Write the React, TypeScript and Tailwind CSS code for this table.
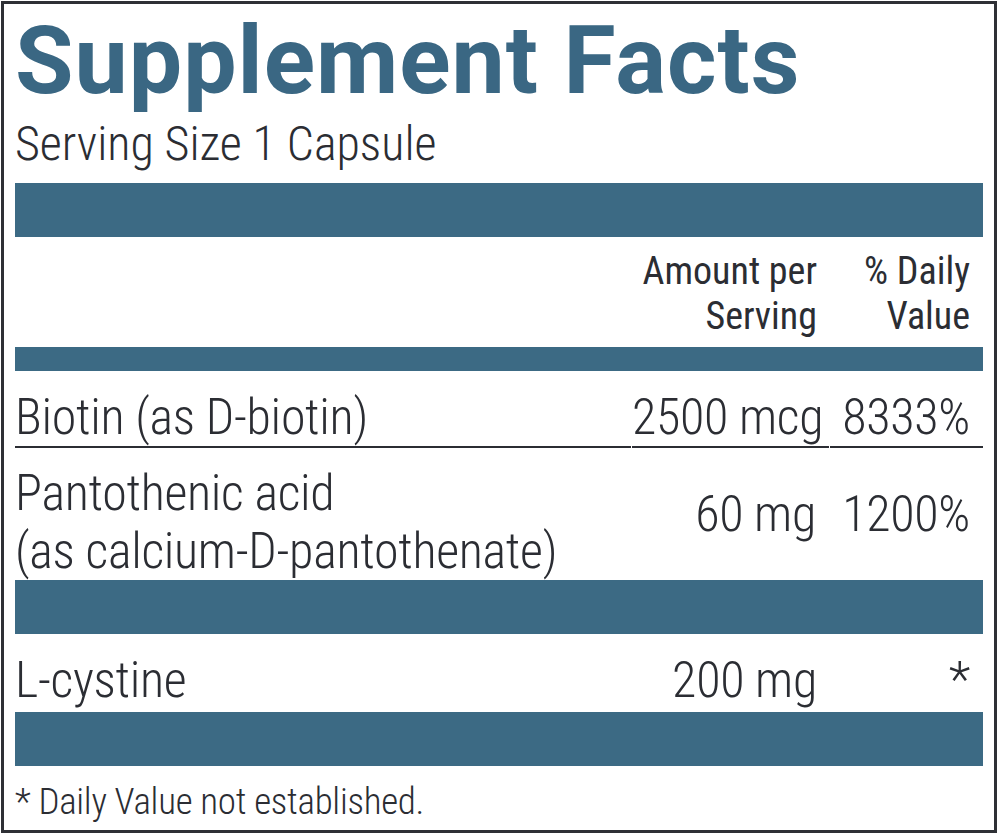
const rows = [
  { name: ['Biotin (as D-biotin)'], amount: '2500 mcg', dv: '8333%' },
  { name: ['Pantothenic acid', '(as calcium-D-pantothenate)'], amount: '60 mg', dv: '1200%' },
];

function Bar({ thin = false }: { thin?: boolean }) {
  return <div className={thin ? 'h-[24px] bg-[#3c6a84]' : 'h-[54px] bg-[#3c6a84]'} />;
}

export default function App() {
  return (
    <div className="w-[1000px] h-[835px] bg-white">
      <div className="ml-px mt-px w-[996px] h-[832px] border-[3px] border-[#2e3035] px-[11px] text-[#2b2d33] font-[family-name:'Roboto_Condensed',Roboto,sans-serif] font-light whitespace-nowrap">
        {/* header */}
        <h1 className="mt-[9px] h-[95px] text-[95px] leading-none font-bold text-[#3a6783] font-[family-name:Roboto,sans-serif] tracking-[1px]">
          Supplement Facts
        </h1>
        <div className="mt-[12px] h-[48px] text-[48px] leading-none">Serving Size 1 Capsule</div>
        <div className="mt-[15px]">
          <Bar />
        </div>

        <div className="grid grid-cols-[617px_198px_153px] h-[110px] pt-[12px] text-[38px] leading-[45px] font-normal text-right">
          <div />
          <div className="pr-[13px]">
            Amount per
            <br />
            Serving
          </div>
          <div className="pr-[13px]">
            % Daily
            <br />
            Value
          </div>
        </div>
        <Bar thin />

        {/* nutrients */}
        {rows.map((r, i) => (
          <div
            key={i}
            className={
              i === 0
                ? 'grid grid-cols-[616px_197px_153px] gap-x-px h-[77px] text-[50px] tracking-[-0.3px]'
                : 'grid grid-cols-[616px_197px_153px] gap-x-px h-[132px] text-[50px] tracking-[-0.3px]'
            }
          >
            <div
              className={
                i === 0
                  ? 'pt-[21px] leading-none border-b-2 border-[#2b2d33]'
                  : 'pt-[16px] leading-[58px]'
              }
            >
              {r.name.map((n) => (
                <div key={n}>{n}</div>
              ))}
            </div>
            <div
              className={
                i === 0
                  ? 'pt-[21px] leading-none text-right pr-[13px] border-b-2 border-[#2b2d33]'
                  : 'flex items-center justify-end pr-[13px] leading-none'
              }
            >
              {r.amount}
            </div>
            <div
              className={
                i === 0
                  ? 'pt-[21px] leading-none text-right pr-[13px] border-b-2 border-[#2b2d33]'
                  : 'flex items-center justify-end pr-[13px] leading-none'
              }
            >
              {r.dv}
            </div>
          </div>
        ))}
        <Bar />

        <div className="grid grid-cols-[617px_198px_153px] h-[78px] pt-[21px] text-[50px] leading-none tracking-[-0.3px]">
          <div>L-cystine</div>
          <div className="text-right pr-[13px]">200 mg</div>
          <div className="text-right pr-[13px]">*</div>
        </div>
        <Bar />

        {/* footnote */}
        <div className="pt-[17px] text-[37px] leading-none tracking-[-0.3px]">* Daily Value not established.</div>
      </div>
    </div>
  );
}
